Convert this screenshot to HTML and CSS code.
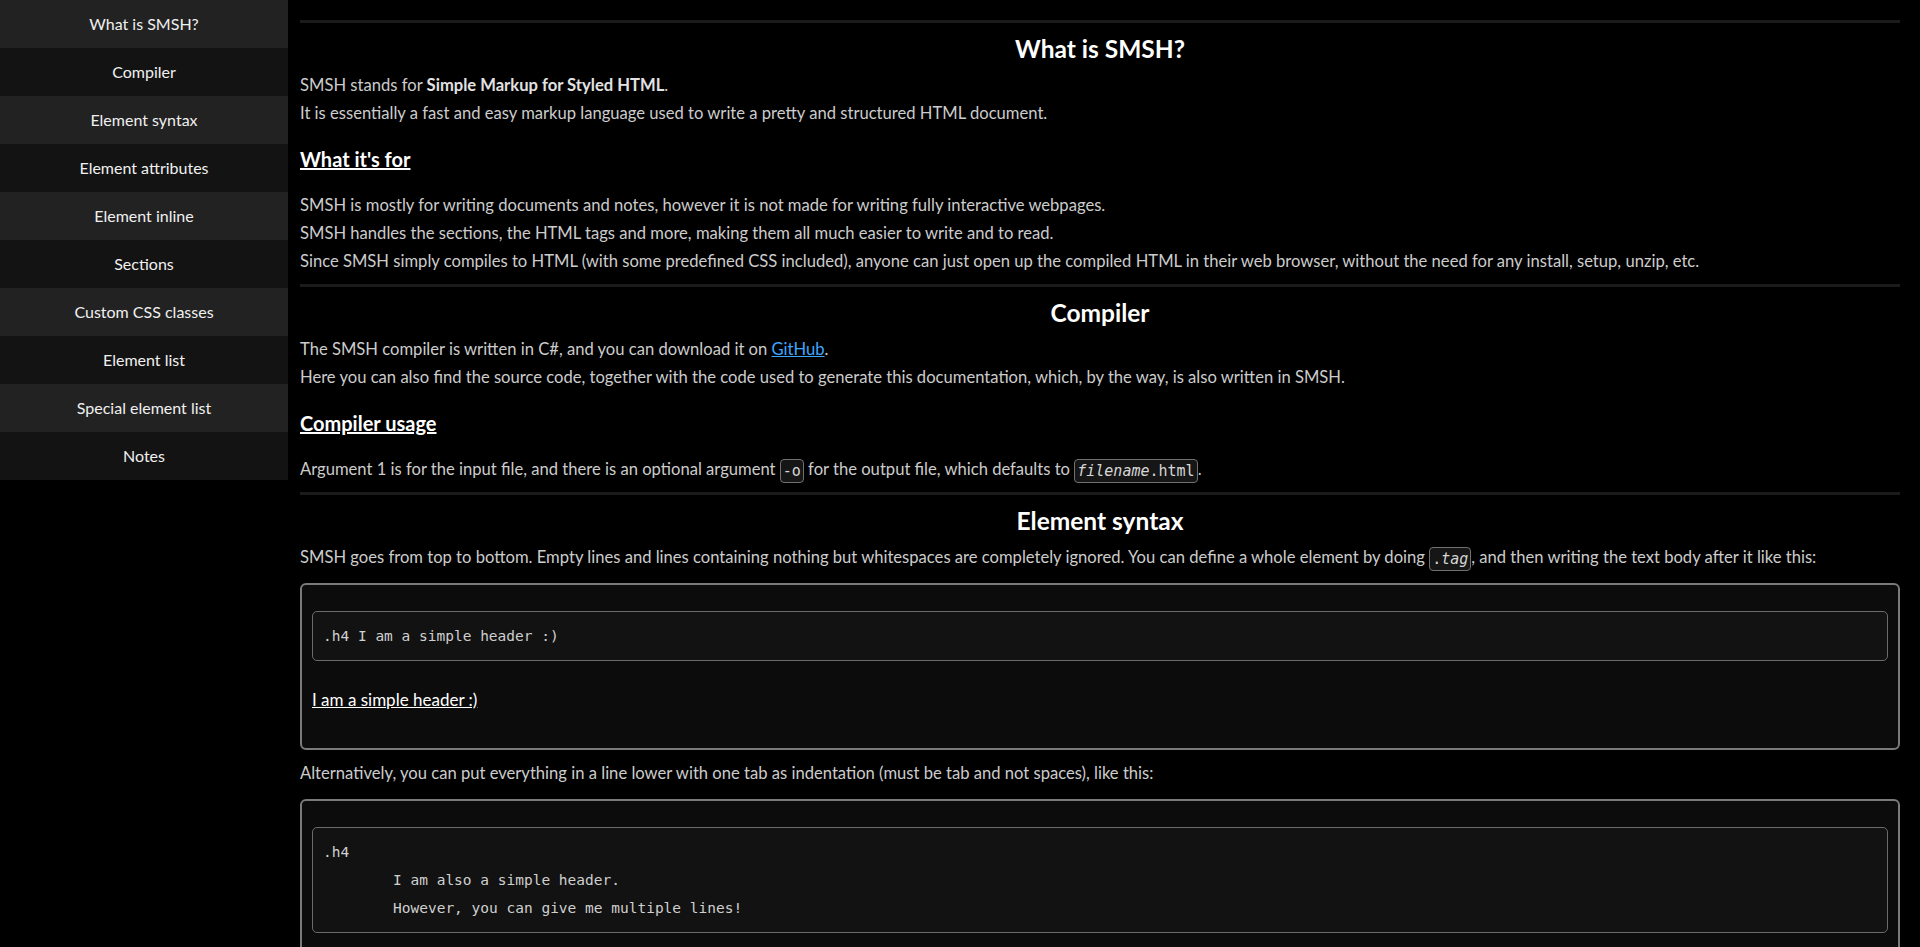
FILE: index.html
```html
<!DOCTYPE html>
<html lang="en">
<head>
<meta charset="utf-8">
<title>SMSH Documentation</title>
<link rel="stylesheet" href="styles.css">
</head>
<body>
<div class="layout">
  <nav class="sidebar">
    <a class="nav-item odd" href="#what">What is SMSH?</a>
    <a class="nav-item" href="#compiler">Compiler</a>
    <a class="nav-item odd" href="#syntax">Element syntax</a>
    <a class="nav-item" href="#attributes">Element attributes</a>
    <a class="nav-item odd" href="#inline">Element inline</a>
    <a class="nav-item" href="#sections">Sections</a>
    <a class="nav-item odd" href="#css">Custom CSS classes</a>
    <a class="nav-item" href="#list">Element list</a>
    <a class="nav-item odd" href="#special">Special element list</a>
    <a class="nav-item" href="#notes">Notes</a>
  </nav>
  <main class="content">
    <section class="section" id="what">
      <hr class="rule">
      <h2 class="title">What is SMSH?</h2>
      <p class="line">SMSH stands for <b class="strong">Simple Markup for Styled HTML</b>.</p>
      <p class="line">It is essentially a fast and easy markup language used to write a pretty and structured HTML document.</p>
      <h3 class="subtitle">What it's for</h3>
      <p class="line">SMSH is mostly for writing documents and notes, however it is not made for writing fully interactive webpages.</p>
      <p class="line">SMSH handles the sections, the HTML tags and more, making them all much easier to write and to read.</p>
      <p class="line">Since SMSH simply compiles to HTML (with some predefined CSS included), anyone can just open up the compiled HTML in their web browser, without the need for any install, setup, unzip, etc.</p>
    </section>
    <section class="section" id="compiler">
      <hr class="rule">
      <h2 class="title">Compiler</h2>
      <p class="line">The SMSH compiler is written in C#, and you can download it on <a class="link" href="#">GitHub</a>.</p>
      <p class="line">Here you can also find the source code, together with the code used to generate this documentation, which, by the way, is also written in SMSH.</p>
      <h3 class="subtitle">Compiler usage</h3>
      <p class="line">Argument 1 is for the input file, and there is an optional argument <code class="icode">-o</code> for the output file, which defaults to <code class="icode"><i>filename</i>.html</code>.</p>
    </section>
    <section class="section" id="syntax">
      <hr class="rule">
      <h2 class="title">Element syntax</h2>
      <p class="line">SMSH goes from top to bottom. Empty lines and lines containing nothing but whitespaces are completely ignored. You can define a whole element by doing <code class="icode">.<i>tag</i></code>, and then writing the text body after it like this:</p>
      <div class="example">
        <pre class="code">.h4 I am a simple header :)</pre>
        <h4 class="demo-h4">I am a simple header :)</h4>
      </div>
      <p class="line">Alternatively, you can put everything in a line lower with one tab as indentation (must be tab and not spaces), like this:</p>
      <div class="example">
        <pre class="code">.h4
	I am also a simple header.
	However, you can give me multiple lines!</pre>
        <h4 class="demo-h4">I am also a simple header. However, you can give me multiple lines!</h4>
      </div>
    </section>
  </main>
</div>
</body>
</html>
```
FILE: styles.css
```css
html, body {
  margin: 0;
  padding: 0;
  background: #000;
}
body {
  font-family: Lato, "Open Sans", sans-serif;
  color: #cccccc;
  overflow: hidden;
}
.layout {
  display: flex;
  align-items: flex-start;
}
.sidebar {
  width: 288px;
  flex: 0 0 288px;
  display: flex;
  flex-direction: column;
}
.nav-item {
  display: block;
  height: 48px;
  line-height: 48px;
  text-align: center;
  background: #131313;
  color: #f0f0f0;
  text-decoration: none;
  font-size: 16px;
}
.nav-item.odd {
  background: #222;
}
.content {
  flex: 1;
  padding: 20px 20px 0 12px;
  min-width: 0;
}
.section {
  padding-bottom: 9px;
}
.rule {
  border: none;
  height: 3px;
  background: #1b1b1b;
  margin: 0;
}
.title {
  margin: 8px 0 4px;
  line-height: 36px;
  font-size: 24.5px;
  font-weight: 700;
  color: #fff;
  text-align: center;
}
.line {
  margin: 0;
  font-size: 16.6px;
  line-height: 28px;
}
.strong {
  color: #e2e2e2;
}
.subtitle {
  margin: 18px 0;
  line-height: 28px;
  font-size: 20px;
  font-weight: 700;
  color: #fff;
  text-decoration: underline;
}
.link {
  color: #3ea6ff;
}
.icode {
  font-family: "DejaVu Sans Mono", "Liberation Mono", monospace;
  font-size: 15px;
  line-height: 20px;
  display: inline-block;
  padding: 1px 2px;
  border: 1px solid #707070;
  border-radius: 4px;
  background: #161616;
  color: #d6d6d6;
  vertical-align: middle;
}
.example {
  margin: 12px 0 9px;
  padding: 10px;
  border: 2px solid #7a7a7a;
  border-radius: 6px;
  background: #0c0c0c;
}
.code {
  margin: 16px 0 0;
  padding: 10px;
  border: 1px solid #6a6a6a;
  border-radius: 5px;
  background: #121212;
  font-family: "DejaVu Sans Mono", "Liberation Mono", monospace;
  font-size: 14.5px;
  line-height: 28px;
  color: #cfcfcf;
  tab-size: 70px;
  white-space: pre;
}
.demo-h4 {
  margin: 25px 0 24px;
  font-size: 17px;
  line-height: 28px;
  font-weight: 400;
  color: #fff;
  text-decoration: underline;
}
```
